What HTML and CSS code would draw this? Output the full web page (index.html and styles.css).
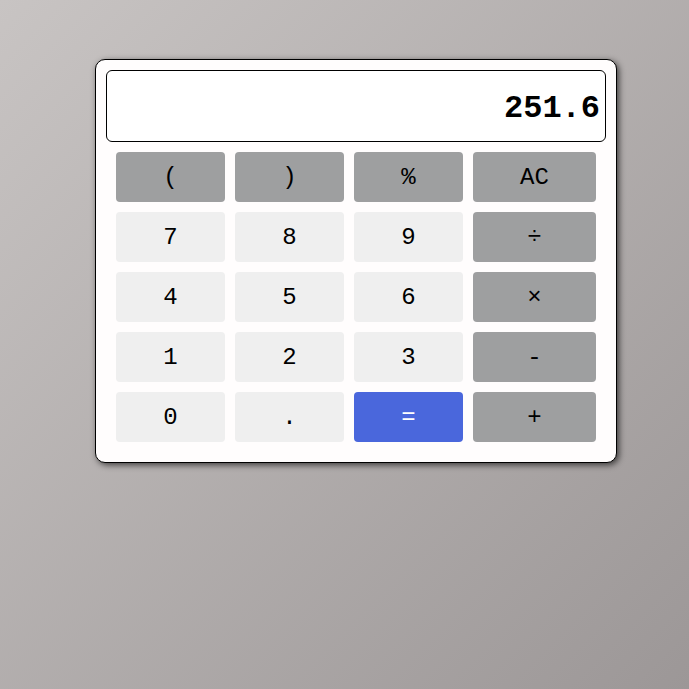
FILE: index.html
```html
<!DOCTYPE html>
<html lang="en">
<head>
<meta charset="utf-8">
<title>Calculator</title>
<link rel="stylesheet" href="styles.css">
</head>
<body>
<div class="calc">
  <div class="display">251.6</div>
  <div class="keys">
    <button class="key op">(</button>
    <button class="key op">)</button>
    <button class="key op">%</button>
    <button class="key op">AC</button>
    <button class="key">7</button>
    <button class="key">8</button>
    <button class="key">9</button>
    <button class="key op">÷</button>
    <button class="key">4</button>
    <button class="key">5</button>
    <button class="key">6</button>
    <button class="key op">×</button>
    <button class="key">1</button>
    <button class="key">2</button>
    <button class="key">3</button>
    <button class="key op">-</button>
    <button class="key">0</button>
    <button class="key">.</button>
    <button class="key eq">=</button>
    <button class="key op">+</button>
  </div>
</div>
</body>
</html>
```

FILE: styles.css
```css
html, body {
  margin: 0;
  padding: 0;
}
body {
  width: 689px;
  height: 689px;
  background: linear-gradient(135deg, #c8c4c3 0%, #9c9797 100%);
  padding: 59px 0 0 95px;
  box-sizing: border-box;
  font-family: "Liberation Mono", "Courier New", monospace;
}
.calc {
  width: 500px;
  padding: 10px;
  background: #fffdfd;
  border: 1px solid #000;
  border-radius: 10px;
  box-shadow: 2px 2px 6px rgba(0, 0, 0, 0.65);
  display: flex;
  flex-direction: column;
  gap: 10px;
}
.display {
  height: 70px;
  background: #fff;
  border: 1px solid #000;
  border-radius: 6px;
  display: flex;
  align-items: center;
  justify-content: flex-end;
  padding: 5px 5px 0 0;
  box-sizing: border-box;
  height: 72px;
  font-family: "Liberation Mono", "Courier New", monospace;
  font-weight: bold;
  font-size: 32px;
  color: #000;
}
.keys {
  display: grid;
  grid-template-columns: 109px 109px 109px 123px;
  grid-auto-rows: 50px;
  gap: 10px;
  padding: 0 10px 10px 10px;
}
.key {
  border: none;
  border-radius: 4px;
  background: #efefef;
  color: #000;
  font-family: "Liberation Mono", "Courier New", monospace;
  font-size: 24px;
  padding: 0;
  margin: 0;
}
.key.op {
  background: #9e9fa0;
}
.key.eq {
  background: #4a67dc;
  color: #fff;
}
```
